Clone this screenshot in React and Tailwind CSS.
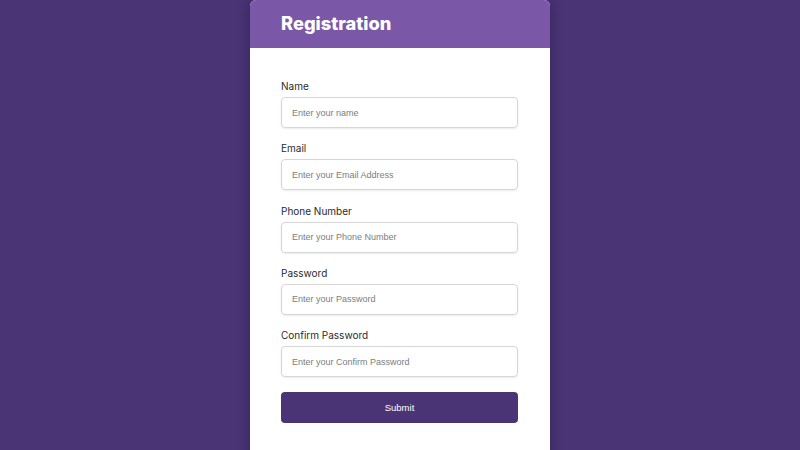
export default function App() {
  const fields = [
    ["Name", "Enter your name"],
    ["Email", "Enter your Email Address"],
    ["Phone Number", "Enter your Phone Number"],
    ["Password", "Enter your Password"],
    ["Confirm Password", "Enter your Confirm Password"],
  ];
  const arial = '"Liberation Sans", Arial, sans-serif';
  return (
    <div className="w-[800px] h-[450px] overflow-hidden bg-[#4a3475] flex justify-center">
      <div className="w-[300px] h-[470px] bg-white rounded-t-[6px] overflow-hidden shadow-[0_0_14px_rgba(30,15,60,0.45)] flex flex-col">
        <div className="h-[48px] bg-[#7b57a7] flex items-center pl-[31px]">
          <h1 className="text-white text-[18.3px] font-extrabold" style={{ fontFamily: 'Inter, "Noto Sans", sans-serif' }}>
            Registration
          </h1>
        </div>
        <div className="pl-[31px] pr-[32px] pt-[28px] flex flex-col gap-[10.3px]">
          {fields.map(([label, ph]) => (
            <div key={label} className="flex flex-col">
              <label className="h-[21px] text-[10px] leading-[20px] text-[#2a2a2a]" style={{ fontFamily: 'Inter, "Noto Sans", sans-serif' }}>
                {label}
              </label>
              <input
                placeholder={ph}
                className="h-[31px] w-full rounded-[4px] border-[1.5px] border-[#d6d6d6] px-[10px] text-[9px] shadow-[0_1px_2px_rgba(0,0,0,0.08)] outline-none placeholder:text-[#7d7d7d]"
                style={{ fontFamily: arial }}
              />
            </div>
          ))}
          <button
            className="mt-[5px] h-[31px] w-full rounded-[4px] bg-[#4b3476] text-white text-[9.5px]"
            style={{ fontFamily: arial }}
          >
            Submit
          </button>
        </div>
      </div>
    </div>
  );
}
